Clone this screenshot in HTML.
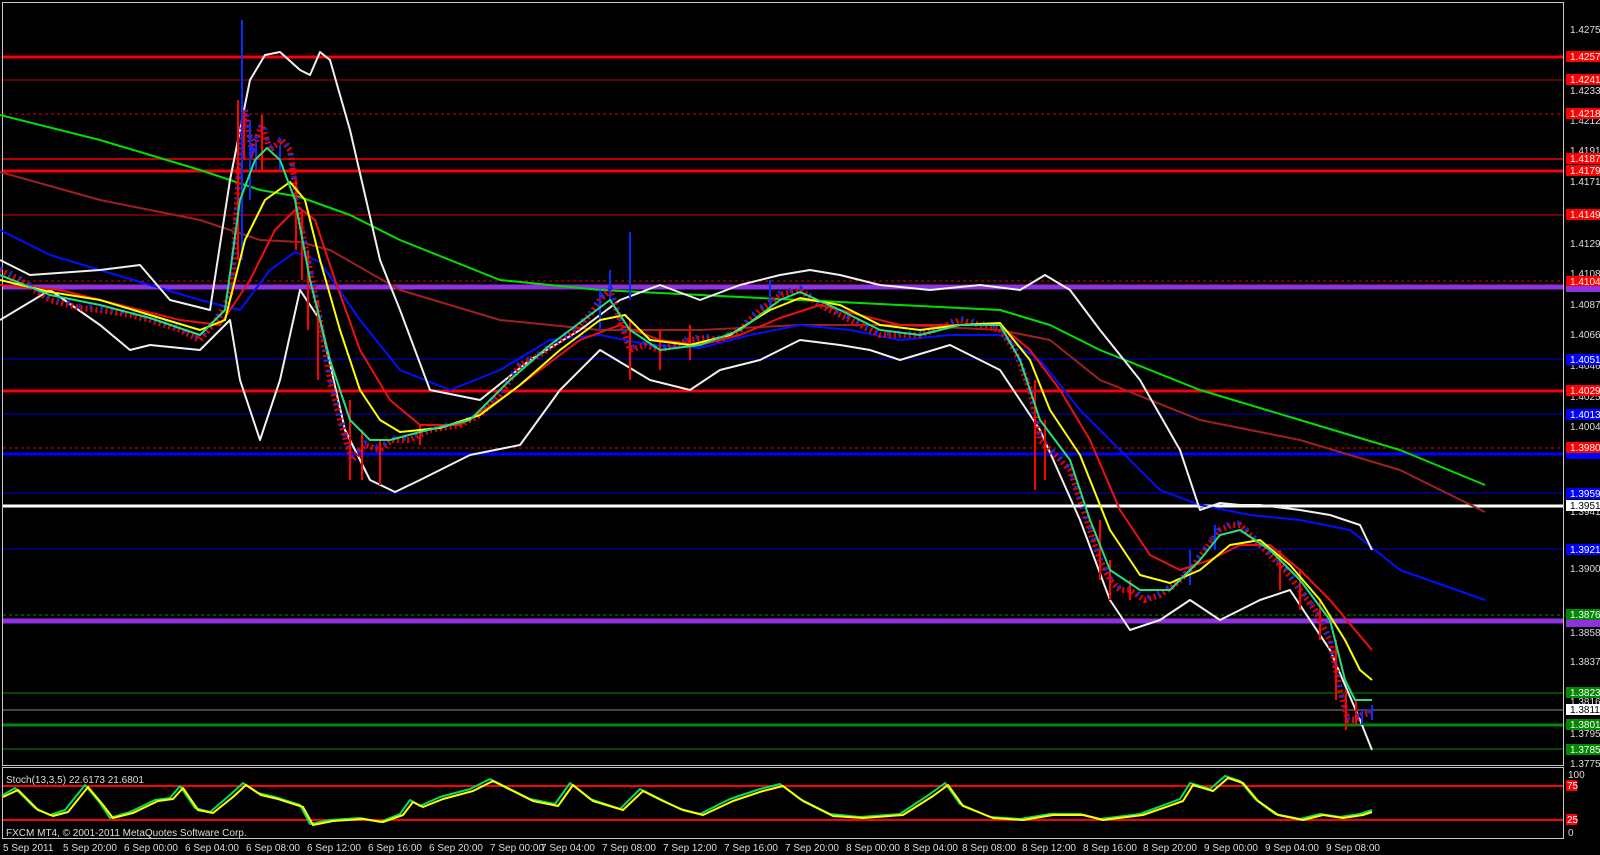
<!DOCTYPE html>
<html><head><meta charset="utf-8"><style>
html,body{margin:0;padding:0;background:#000;width:1600px;height:855px;overflow:hidden}
svg{display:block}
text{font-family:"Liberation Sans",sans-serif;font-size:10px;fill:#ddd}
.lb{font-size:10px;fill:#fff}
</style></head><body>
<svg width="1600" height="855" viewBox="0 0 1600 855" xmlns="http://www.w3.org/2000/svg">
<rect width="1600" height="855" fill="#000"/>
<rect x="2.5" y="2.5" width="1561" height="763" fill="none" stroke="#c8c8c8" stroke-width="1"/>
<rect x="2.5" y="767.5" width="1561" height="71" fill="none" stroke="#c8c8c8" stroke-width="1"/>
<g fill="none">
<line x1="3" x2="1563" y1="57" y2="57" stroke="#f00" stroke-width="3"/>
<line x1="3" x2="1563" y1="80" y2="80" stroke="#b00" stroke-width="1"/>
<line x1="3" x2="1563" y1="114" y2="114" stroke="#d00" stroke-width="1" stroke-dasharray="3,3"/>
<line x1="3" x2="1563" y1="159" y2="159" stroke="#b00" stroke-width="2"/>
<line x1="3" x2="1563" y1="171" y2="171" stroke="#f00" stroke-width="3"/>
<line x1="3" x2="1563" y1="215" y2="215" stroke="#d00" stroke-width="1"/>
<line x1="3" x2="1563" y1="281" y2="281" stroke="#d00" stroke-width="1" stroke-dasharray="3,3"/>
<line x1="3" x2="1563" y1="287" y2="287" stroke="#9030e0" stroke-width="5"/>
<line x1="3" x2="1563" y1="359" y2="359" stroke="#00c" stroke-width="1"/>
<line x1="3" x2="1563" y1="391" y2="391" stroke="#f00" stroke-width="3"/>
<line x1="3" x2="1563" y1="414" y2="414" stroke="#00c" stroke-width="1"/>
<line x1="3" x2="1563" y1="448" y2="448" stroke="#e00" stroke-width="1" stroke-dasharray="3,3"/>
<line x1="3" x2="1563" y1="454" y2="454" stroke="#00f" stroke-width="3"/>
<line x1="3" x2="1563" y1="493" y2="493" stroke="#00c" stroke-width="1"/>
<line x1="3" x2="1563" y1="506" y2="506" stroke="#fff" stroke-width="3"/>
<line x1="3" x2="1563" y1="549" y2="549" stroke="#00c" stroke-width="1"/>
<line x1="3" x2="1563" y1="615" y2="615" stroke="#080" stroke-width="1" stroke-dasharray="3,3"/>
<line x1="3" x2="1563" y1="621" y2="621" stroke="#9030e0" stroke-width="5"/>
<line x1="3" x2="1563" y1="693" y2="693" stroke="#080" stroke-width="1"/>
<line x1="3" x2="1563" y1="710" y2="710" stroke="#778899" stroke-width="1"/>
<line x1="3" x2="1563" y1="725" y2="725" stroke="#080" stroke-width="3"/>
<line x1="3" x2="1563" y1="749" y2="749" stroke="#080" stroke-width="1"/>
<line x1="3" x2="1563" y1="786" y2="786" stroke="#f00" stroke-width="2"/>
<line x1="3" x2="1563" y1="820" y2="820" stroke="#f00" stroke-width="2"/>
</g>
<g fill="none" stroke-width="2" stroke-linejoin="round">
<polyline stroke="#00e000" points="0,115 100,140 200,170 260,190 300,197 350,215 400,240 500,280 600,290 700,295 800,300 900,305 1000,310 1050,325 1100,350 1200,390 1300,420 1400,450 1485,485"/>
<polyline stroke="#a02020" points="0,172 100,200 200,220 260,240 300,242 330,250 400,290 500,320 600,330 700,330 800,325 900,325 1000,330 1050,340 1100,380 1200,420 1300,440 1400,470 1485,512"/>
<polyline stroke="#0010ff" points="0,230 50,255 100,270 150,285 200,300 240,310 270,270 295,252 320,262 360,320 400,370 450,390 500,370 550,340 600,335 650,345 700,348 750,335 800,325 850,330 900,340 950,335 1000,335 1040,360 1080,410 1120,450 1160,490 1200,505 1250,515 1300,520 1350,530 1400,570 1485,600"/>
<polyline stroke="#f0f0f0" points="0,260 30,275 100,270 140,265 170,300 210,310 230,180 250,80 265,55 280,52 300,70 310,75 320,52 330,60 350,130 380,260 400,310 430,390 480,400 530,360 580,330 620,300 660,285 700,300 740,285 780,275 810,270 840,275 880,285 930,290 980,285 1020,290 1045,275 1070,290 1100,330 1140,380 1180,450 1200,510 1220,503 1240,505 1260,505 1300,510 1330,515 1360,525 1372,550"/>
<polyline stroke="#f0f0f0" points="0,320 50,290 100,325 130,350 150,345 200,350 230,320 240,380 260,440 280,380 300,290 320,320 345,430 370,480 395,492 420,480 470,455 520,445 560,390 600,350 650,380 690,390 720,370 760,360 800,340 840,345 870,350 900,360 950,345 1000,370 1040,430 1080,520 1110,600 1130,630 1160,620 1190,600 1220,620 1260,600 1290,590 1330,650 1360,720 1372,750"/>
</g>
<g fill="none">
<polyline stroke="#e00" stroke-width="6" stroke-dasharray="2,3" points="0,270 20,280 50,300 80,308 100,310 130,315 150,320 180,330 200,340 220,315 232,290 240,150 245,110 252,150 262,125 270,150 282,140 290,150 300,220 310,270 320,320 330,380 340,420 352,460 365,445 380,450 392,440 410,440 430,430 460,425 480,415 500,395 520,365 540,355 560,340 575,330 590,315 600,300 610,290 620,320 630,350 645,345 660,350 675,345 690,340 705,338 720,340 740,330 760,310 780,295 800,290 820,305 840,315 860,325 880,335 900,335 920,335 940,328 960,320 980,325 1000,330 1015,350 1030,390 1040,440 1055,455 1070,470 1080,500 1090,530 1100,560 1110,580 1120,590 1130,590 1145,600 1160,595 1175,585 1190,570 1205,550 1220,530 1232,525 1240,525 1255,540 1270,555 1285,570 1300,590 1315,610 1330,640 1340,690 1348,720 1355,720 1362,715 1372,712"/>
<polyline stroke="#0030ff" stroke-width="5" stroke-dasharray="2,9" points="0,268 20,278 50,298 80,306 100,308 130,313 150,318 180,328 200,338 220,313 232,288 240,148 245,108 252,148 262,123 270,148 282,138 290,148 300,218 310,268 320,318 330,378 340,418 352,458 365,443 380,448 392,438 410,438 430,428 460,423 480,413 500,393 520,363 540,353 560,338 575,328 590,313 600,298 610,288 620,318 630,348 645,343 660,348 675,343 690,338 705,336 720,338 740,328 760,308 780,293 800,288 820,303 840,313 860,323 880,333 900,333 920,333 940,326 960,318 980,323 1000,328 1015,348 1030,388 1040,438 1055,453 1070,468 1080,498 1090,528 1100,558 1110,578 1120,588 1130,588 1145,598 1160,593 1175,583 1190,568 1205,548 1220,528 1232,523 1240,523 1255,538 1270,553 1285,568 1300,588 1315,608 1330,638 1340,688 1348,718 1355,718 1362,713 1372,710"/>
<g stroke="#f00" stroke-width="2">
<line x1="238" y1="100" x2="238" y2="260"/><line x1="244" y1="110" x2="244" y2="160"/><line x1="262" y1="115" x2="262" y2="170"/>
<line x1="296" y1="180" x2="296" y2="250"/><line x1="302" y1="210" x2="302" y2="280"/><line x1="308" y1="250" x2="308" y2="330"/>
<line x1="318" y1="300" x2="318" y2="380"/><line x1="350" y1="400" x2="350" y2="480"/><line x1="362" y1="430" x2="362" y2="480"/>
<line x1="380" y1="440" x2="380" y2="485"/><line x1="420" y1="425" x2="420" y2="445"/><line x1="630" y1="320" x2="630" y2="380"/>
<line x1="660" y1="330" x2="660" y2="370"/><line x1="690" y1="325" x2="690" y2="360"/><line x1="1035" y1="380" x2="1035" y2="490"/>
<line x1="1045" y1="420" x2="1045" y2="480"/><line x1="1100" y1="520" x2="1100" y2="580"/><line x1="1110" y1="560" x2="1110" y2="600"/>
<line x1="1130" y1="580" x2="1130" y2="600"/><line x1="1280" y1="550" x2="1280" y2="590"/><line x1="1300" y1="570" x2="1300" y2="610"/>
<line x1="1320" y1="600" x2="1320" y2="640"/><line x1="1336" y1="640" x2="1336" y2="700"/><line x1="1346" y1="690" x2="1346" y2="730"/><line x1="1356" y1="700" x2="1356" y2="725"/>
</g>
<g stroke="#0030ff" stroke-width="2">
<line x1="242" y1="20" x2="242" y2="260"/><line x1="250" y1="120" x2="250" y2="200"/><line x1="256" y1="140" x2="256" y2="170"/>
<line x1="280" y1="145" x2="280" y2="170"/><line x1="600" y1="290" x2="600" y2="330"/><line x1="610" y1="270" x2="610" y2="300"/>
<line x1="630" y1="232" x2="630" y2="300"/><line x1="770" y1="280" x2="770" y2="310"/><line x1="1190" y1="550" x2="1190" y2="585"/>
<line x1="1215" y1="525" x2="1215" y2="550"/><line x1="1362" y1="710" x2="1362" y2="725"/><line x1="1372" y1="705" x2="1372" y2="720"/>
</g>
</g>
<g fill="none" stroke-width="2" stroke-linejoin="round">
<polyline stroke="#ee1010" points="0,285 60,290 120,305 180,320 220,325 250,280 275,230 298,207 315,220 335,280 360,350 390,400 420,425 460,425 500,400 540,370 580,340 620,325 660,340 700,345 740,335 780,318 820,305 860,315 900,325 950,325 1000,325 1030,350 1060,390 1090,440 1120,510 1150,555 1180,570 1210,560 1240,545 1270,545 1300,570 1330,600 1355,630 1372,650"/>
<polyline stroke="#ffff00" points="0,280 50,292 100,300 150,315 200,330 225,320 245,240 265,200 290,182 305,200 320,260 340,330 360,390 380,420 400,432 440,428 480,415 520,385 560,350 600,320 625,315 650,340 690,345 730,335 770,310 800,298 840,305 880,325 920,330 960,325 1000,323 1030,360 1050,410 1080,455 1110,530 1140,575 1170,583 1200,570 1230,545 1260,540 1290,565 1320,600 1345,640 1360,670 1372,680"/>
<polyline stroke="#20e080" points="0,275 50,295 100,305 150,318 200,335 225,310 240,200 255,160 267,148 280,160 295,200 310,280 330,360 350,420 370,440 390,440 420,432 470,420 510,380 550,345 590,315 610,300 630,330 660,350 700,345 740,330 780,300 800,292 840,310 880,330 920,335 960,325 1000,325 1020,360 1040,420 1070,460 1090,520 1110,570 1140,590 1170,590 1200,560 1220,535 1240,530 1270,550 1300,580 1330,620 1345,680 1355,700 1372,700"/>
</g>
<g fill="none" stroke-width="2" stroke-linejoin="round">
<polyline stroke="#00e060" points="3,795 15,788 35,808 50,815 65,810 85,785 100,803 110,818 130,812 155,800 170,798 180,786 195,808 210,812 230,795 243,783 258,793 275,797 300,805 310,824 330,820 360,818 380,822 400,814 410,800 420,806 440,797 470,789 490,779 510,789 530,799 555,804 570,783 590,799 620,809 640,789 660,799 680,809 700,814 730,799 760,789 780,784 800,799 830,814 860,817 900,814 930,794 945,783 960,804 990,817 1020,819 1050,814 1080,814 1100,819 1140,814 1180,799 1190,783 1210,789 1225,776 1240,781 1255,799 1275,814 1300,819 1320,814 1340,817 1360,814 1372,810"/>
<polyline stroke="#ffff00" points="3,797 18,790 38,810 53,816 68,812 88,787 103,805 113,818 133,813 158,801 173,799 183,788 198,810 213,813 233,797 246,785 261,795 278,799 303,807 313,825 333,821 363,819 383,822 403,815 413,802 423,807 443,799 473,791 493,781 513,791 533,801 558,806 573,785 593,801 623,810 643,791 663,801 683,810 703,815 733,801 763,791 783,786 803,801 833,816 863,818 903,815 933,796 948,785 963,806 993,818 1023,820 1053,815 1083,815 1103,820 1143,815 1183,801 1193,785 1213,791 1228,778 1243,783 1258,801 1278,815 1303,820 1323,815 1343,818 1363,815 1372,812"/>
</g>
<text x="6" y="783">Stoch(13,3,5) 22.6173 21.6801</text>
<text x="6" y="836">FXCM MT4, © 2001-2011 MetaQuotes Software Corp.</text>
<g>
<text x="1570" y="33">1.42750</text><text x="1570" y="94">1.42335</text><text x="1570" y="124">1.42125</text>
<text x="1570" y="154">1.41915</text><text x="1570" y="185">1.41710</text><text x="1570" y="247">1.41290</text>
<text x="1570" y="277">1.41085</text><text x="1570" y="308">1.40875</text><text x="1570" y="338">1.40665</text>
<text x="1570" y="369">1.40460</text><text x="1570" y="400">1.40250</text><text x="1570" y="430">1.40040</text>
<text x="1570" y="515">1.39415</text><text x="1570" y="572">1.39000</text><text x="1570" y="636">1.38585</text>
<text x="1570" y="665">1.38375</text><text x="1570" y="705">1.38165</text><text x="1570" y="737">1.37955</text>
<text x="1570" y="767">1.37750</text>
<text x="1568" y="778">100</text><text x="1568" y="836">0</text>
</g>
<g>
<rect x="1566" y="51" width="34" height="11" fill="#f00"/><text class="lb" x="1570" y="60">1.42570</text>
<rect x="1566" y="74" width="34" height="11" fill="#f00"/><text class="lb" x="1570" y="83">1.42410</text>
<rect x="1566" y="108" width="34" height="11" fill="#f00"/><text class="lb" x="1570" y="117">1.42180</text>
<rect x="1566" y="153" width="34" height="11" fill="#f00"/><text class="lb" x="1570" y="162">1.41870</text>
<rect x="1566" y="165" width="34" height="11" fill="#f00"/><text class="lb" x="1570" y="174">1.41790</text>
<rect x="1566" y="209" width="34" height="11" fill="#f00"/><text class="lb" x="1570" y="218">1.41490</text>
<rect x="1566" y="276" width="34" height="11" fill="#f00"/><text class="lb" x="1570" y="285">1.41040</text>
<rect x="1566" y="286" width="34" height="6" fill="#9030e0"/>
<rect x="1566" y="354" width="34" height="11" fill="#00f"/><text class="lb" x="1570" y="363">1.40510</text>
<rect x="1566" y="385" width="34" height="11" fill="#f00"/><text class="lb" x="1570" y="394">1.40290</text>
<rect x="1566" y="409" width="34" height="11" fill="#00f"/><text class="lb" x="1570" y="418">1.40130</text>
<rect x="1566" y="442" width="34" height="11" fill="#f00"/><text class="lb" x="1570" y="451">1.39800</text>
<rect x="1566" y="453" width="34" height="6" fill="#00f"/>
<rect x="1566" y="488" width="34" height="11" fill="#00f"/><text class="lb" x="1570" y="497">1.39590</text>
<rect x="1566" y="500" width="34" height="11" fill="#fff"/><text x="1570" y="509" style="fill:#000">1.39510</text>
<rect x="1566" y="544" width="34" height="11" fill="#00f"/><text class="lb" x="1570" y="553">1.39210</text>
<rect x="1566" y="609" width="34" height="11" fill="#080"/><text class="lb" x="1570" y="618">1.38762</text>
<rect x="1566" y="620" width="34" height="7" fill="#9030e0"/>
<rect x="1566" y="687" width="34" height="11" fill="#080"/><text class="lb" x="1570" y="696">1.38237</text>
<rect x="1566" y="704" width="34" height="11" fill="#fff"/><text x="1570" y="713" style="fill:#000">1.38115</text>
<rect x="1566" y="719" width="34" height="11" fill="#080"/><text class="lb" x="1570" y="728">1.38010</text>
<rect x="1566" y="744" width="34" height="11" fill="#080"/><text class="lb" x="1570" y="753">1.37850</text>
<rect x="1566" y="780" width="11" height="11" fill="#f00"/><text class="lb" x="1567" y="789">75</text>
<rect x="1566" y="814" width="11" height="11" fill="#f00"/><text class="lb" x="1567" y="823">25</text>
</g>
<g>
<text x="3" y="851">5 Sep 2011</text><text x="63" y="851">5 Sep 20:00</text><text x="124" y="851">6 Sep 00:00</text>
<text x="185" y="851">6 Sep 04:00</text><text x="246" y="851">6 Sep 08:00</text><text x="307" y="851">6 Sep 12:00</text>
<text x="368" y="851">6 Sep 16:00</text><text x="429" y="851">6 Sep 20:00</text><text x="490" y="851">7 Sep 00:00</text>
<text x="541" y="851">7 Sep 04:00</text><text x="602" y="851">7 Sep 08:00</text><text x="663" y="851">7 Sep 12:00</text>
<text x="724" y="851">7 Sep 16:00</text><text x="785" y="851">7 Sep 20:00</text><text x="846" y="851">8 Sep 00:00</text>
<text x="904" y="851">8 Sep 04:00</text><text x="962" y="851">8 Sep 08:00</text><text x="1022" y="851">8 Sep 12:00</text>
<text x="1083" y="851">8 Sep 16:00</text><text x="1143" y="851">8 Sep 20:00</text><text x="1204" y="851">9 Sep 00:00</text>
<text x="1265" y="851">9 Sep 04:00</text><text x="1326" y="851">9 Sep 08:00</text>
</g>
</svg>
</body></html>
